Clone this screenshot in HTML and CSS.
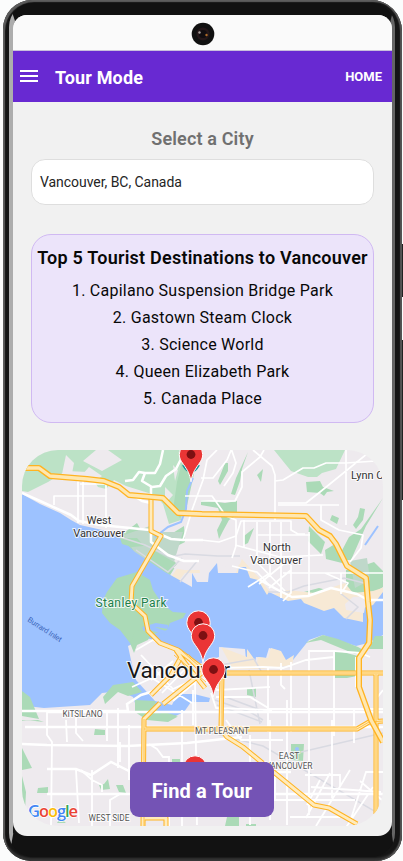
FILE: index.html
```html
<!DOCTYPE html>
<html lang="en">
<head>
<meta charset="utf-8">
<title>Tour Mode</title>
<link rel="stylesheet" href="styles.css">
</head>
<body>
<div class="phone">
  <i class="key key-volume"></i><i class="key key-power"></i>
  <div class="bezel">
    <div class="screen">
      <div class="status"><svg class="camera" viewBox="0 0 24 24"><circle cx="12" cy="12" r="11.3" fill="#111"/><circle cx="12" cy="12" r="6.5" fill="#241719"/><circle cx="12" cy="12" r="4" fill="#100d10"/><circle cx="8.5" cy="10.5" r="1.2" fill="#aaa09b"/><circle cx="15.5" cy="13" r="1.2" fill="#ad6b28"/></svg></div>
      <header class="bar">
        <svg class="menu" viewBox="0 0 18 12"><path d="M0 1h18M0 6h18M0 11h18" stroke="#fff" stroke-width="2"/></svg>
        <h1 class="title">Tour Mode</h1>
        <span class="home">HOME</span>
      </header>
      <main class="content">
        <h2 class="prompt">Select a City</h2>
        <div class="field">Vancouver, BC, Canada</div>
        <section class="card">
          <h3 class="card-title">Top 5 Tourist Destinations to Vancouver</h3>
          <div class="item">1. Capilano Suspension Bridge Park</div>
          <div class="item">2. Gastown Steam Clock</div>
          <div class="item">3. Science World</div>
          <div class="item">4. Queen Elizabeth Park</div>
          <div class="item">5. Canada Place</div>
        </section>
        <div class="map">
          <svg class="map-art" viewBox="22 450 361 376">
            <defs>
              <g id="pin"><path d="M0 .8C-1.200-7-3.500-11-7.500-16.500C-10.500-20.500-11.700-23-11.700-26.500A11.700 11.700 0 0 1 11.700-26.500C11.700-23 10.500-20.500 7.500-16.500C3.500-11 1.200-7 0 .8Z" fill="#ea3535" stroke="#fff"/><circle cy="-26.500" r="4.400" fill="#7d1012"/></g>
            </defs>
            <path fill="#eeeaee" d="M22 450h361v376H22z"/>
            <g fill="#bce2c6">
              <path d="M22 450h154l11 0-2 50-4 20-12 4-6-20-8-9-29-9-12-6-8 9-8-2-10-15-22-1-18 11-20 10-6-1z"/>
              <path d="M274 450h71l-9 19-14 4-5 4-9 0-17-6z"/>
            </g>
            <g fill="#abdab7">
              <path d="M185 450h11l-2 24-8 36-6 8-7-8 4-28zM248 452l-6 17-2 12-5 14-4-1 5-16zM225 463l3 0v8l-8 14-2-4zM306 482l14-1 3 6 11 4-7 1-3 4-4-3-13-1zM201 500l24 3 12-2v14l-8 5-6 11-4 8-2-9 5-10-4-12-17-3zM257 475l6-6-2 13zM360 508l5 1-2 11-7 9-3-4 5-8zM383 498l-17 28-15 34-14 0 12-23 12-8zM332 515l7 3-2 6-7-4zM309 526l16 16-4 12-13-13zM244 536l10-8-6 15-4 2z"/>
              <path d="M120 536l17-13 9 16 22-3 16-10 1 16-20 10 12 12-8 13-14-4-18-15z"/>
              <path d="M346 570l16-4 12-4 9 9v16l-17 11-20-9zM300 593l19-5 15 4-7 9-17-1zM325 550l10-6 9 12 2 8-20-5z"/>
            </g>
            <g fill="#eeeaee"><path d="M83 461l13-11h12l14 10-20 11zM66 455l8 8-3 16-9-5zM82 475l7-8 13 9-9 7zM155 508l9 8-10 9-6-7zM165 487l8 8-8 9zM173 465l5 5-3 11z"/></g>
            <g fill="#bfd8ca"><path d="M124 535l26-9 5 17-8 20-11-8zM151 532h32l-9 30-21-12z"/><path d="M350 561l17-3 3 22-15 8z"/></g>
            <path fill="#f7e9d5" d="M169 580l14-20 15-1 2 14h36l5-15 20 22 11 15 15-5 28 3 30-10 8 10 20-2 12-4-5 30-20 5-30-1-60-19-15 1-30-30-40 0-16 20z"/>
            <path fill="#9dc2ff" d="M22 494l18 10 20 9 11 7 9 5 31 7 8 5 16 15 30 20 27 15 0-14 5 9h11l1-9 8-10 1 10h20l1-6h7l4 11 8 2 9 15 2-3 19 9 13-2 3 4 20 8 10-3 10 10 19 4V608l10-3 10-13v43l-15 8-12 3-13-4-20-7-14 5-16 20-9 0-5-9-10-3-3 10-10-1-1 6-9-3-1-11-26-2v10l-20 7-19-13-19-10-16-3-17 8 3 14 5 20 19 21 17 4 5-11h17l16 4-1 4-18 0-7 10-15 7h-19l-12-7-5-15-13-6-18 2-12 12-46 3-27-3-8-5z"/>
            <path fill="#f7e9d5" d="M221 647l26 10v-8l10 14 1-6 10 1 3-10 10 3 5 9 8-5-2 10-30 4h-29z"/>
            <path fill="#eeeaee" d="M173 568l10-9 14-1 5 12h-18zM217 563l18-9 8 2-3 8-7 6zM345 604l8-7 14-1-3 17-18-3z"/>
            <g fill="#abdab7">
              <path d="M103 600l4-8 10-14 20-6 13 8 3 10 10 15 10 7 13 1-3 5-13 5-3 7-17 5-20 8-10-13-10-7-8-10zM120 538h17l7 8-12 1-10-3z"/>
              <path d="M130 643l4 10 3-8 11-5 4-8-16-2zM103 697l10-12 20-3 9 10-14 4-10-4-13 12zM22 691l8 6 9 22-17-3zM135 700l20 1 3 12 19 4-9 5-21-2-12-8zM160 711l18 5-6 3-10-1zM22 721l16-1 6 2-9-1-15-1zM22 748l10 20-10 2zM95 729l10 1v5h-11zM247 689l9-1v9l-9-2zM335 650l23 6-1 20-10 2-12 0zM375 636l8 0v13h-14z"/>
              <path d="M291 744l13 0-1 17-12-1zM38 788l10-1v6H37zM99 785l5-1 4-5 2 10-9 1zM116 785h7l3 8-7-1zM172 759h8v8h-8zM60 818l6 5h-9zM22 776l4 16-1 20-3-10zM227 817h12v9h-14zM246 824h10v2h-10z"/>
              <path d="M305 643l18-8 15 4 20 8 7 4-10 3-22-9-12-5z"/>
            </g>
            <path fill="none" stroke="#9dc2ff" stroke-width="4" d="M143 629l13-4 12 2M151 628l14 5"/><path fill="none" stroke="#9dc2ff" stroke-width="2" d="M193 478l-6 13-1 18-5 13-13 5-13 10M378 526l-13 19"/><circle cx="297" cy="749" r="2" fill="#9dc2ff"/>
            <g fill="none" stroke="#d9dae2" stroke-width="1.5">
              <path d="M120 537l25 8 25 12 15-3 33 2 22 0M136 550l32 22 14-14M198 560l-18 22M268 592l20 0 16-6 40-8 20 5M220 665l34-6 7 12M215 700l35 12 13 8M217 705l45 17M220 695l43 16M340 593l18 14-12 12M201 730l62 16 120 70M301 752l82-19M249 670l11 54"/>
            </g>
            <g fill="none" stroke="#fff" stroke-width="1.7" stroke-linejoin="round">
              <path stroke-width="2.500" d="M22 493l18 8 31 14 8 6 21 4 50 5 21 9 12 1h20M125 481l8-1 6-8 6 1 10 0 5-9 3-14M145 473l-3 8 10 6 8-1 6-10 10-7 5-10-1-7M151 487v55l17 13 16 6h15M151 503l-9-2-11-7"/>
              <path d="M54 505v-9h23M78 523V480M83 524V480M80 484h26M54 496h52M106 484v44M183 540l9-30 11-30 4-20 10-10M185 496h27l14 20 10 4v26l-4 12M201 478h12l14-18 5-12M231 448l5 15-3 10-9 13M201 501h34l7-14 0-15 18-15 4-7M253 450l19 16 3 9v45M275 481l8-1 20-12 11 0 12-5h20l30-2 5 3M278 503h28l14-11 53-43M278 505h61M346 450v75M321 505v15l18 10 24 5-2 13-11 14"/>
              <path d="M201 540l18 2 17-6 5-15h50v9l7 4 7 0M235 545l45 12 43-2M244 520v28M257 522v38M270 522v55M281 522v76M258 535h52M250 555l35 36M232 566l25 6 12 13M270 573l-22 14M286 562l-27 22M291 570l-22 18M291 565v28l-8 8M309 532v63M283 573h100M341 573v21M325 573l23 10-6 9"/>
              <path stroke-width="2.500" d="M260 580l18 10 14 7 16-1 23-8 26 6 11 6h15"/>
            </g>
            <g fill="none" stroke="#fff" stroke-width="1.8">
              <path stroke-width="2.500" d="M22 711h106l-1-7 14-9 20-6M47 712h336M25 727h358M22 744l25 1 80 1 60-3 55-6M47 769h29l15 6 20-13 20 10h160M47 794h336"/>
              <path d="M47 712v23l5 7-1 84M66 720l1 22M76 715v18l7 8M76 770l3 53M92 770v60M107 711v30M118 708v60M81 770l11 10 10 5v7M120 742v20M110 826V800l10-6M129 725v55M149 744l8 5 6 8h6v69M182 710v116M193 690v35M195 680l2 145M211 693l5 15 5 1M136 650l17-10 15 8M141 655l32 34 22-10M132 687l20-9 40 25M151 680l22-19M162 693l24-25M173 701l28-24M202 678l15 12 53-3M218 668l45-1 20 1 23-8 28-3M268 668v64M281 663v22l4 4M291 662v70M309 650v85M309 651h26l25 2 10 4M334 652v84M356 657v30M216 708l56 2M216 697h34l20 12h113M250 735v90M270 720v100M287 700v125M309 728v87M332 720v78M354 708v35M383 690l-7 9M226 720l15 20h42M305 775h35v12M311 787l70 5M373 787l-28 42M350 770l-34 56M383 772h-17l-16 50M320 780l-13 25M330 773l-24 45M275 770v30h80M360 781l23 20M290 817h50M240 815h30"/>
            </g>
            <g fill="none" stroke-linejoin="round" stroke="#ffb321" stroke-width="5">
              <path d="M151 498v33l10 5-29 50-1 17 14 13 3 15 12 12 18 7 20 15 13 10M176 650l9 13 20 25M187 656l16 16-40 32M160 703l-16 16-1 107M151 695l20-20 10-18"/>
              <path d="M203 673h180M144 729h213l12-7 14-1M222 674l-1 55 6 8 16 10 71 58 15 3 28 16M376 674v140M142 818h24v8"/>
            </g>
            <g fill="none" stroke-linejoin="round" stroke="#ffebbc" stroke-width="3">
              <path d="M151 498v33l10 5-29 50-1 17 14 13 3 15 12 12 18 7 20 15 13 10M176 650l9 13 20 25M187 656l16 16-40 32M160 703l-16 16-1 107M151 695l20-20 10-18"/>
              <path d="M203 673h180M144 729h213l12-7 14-1M222 674l-1 55 6 8 16 10 71 58 15 3 28 16M376 674v140M142 818h24v8"/>
              <path stroke="#ffc24b" stroke-width="1" d="M203 673h180M144 729h213l12-7 14-1M144 719v107M376 674v140M222 674v55M174 655l32 27M182 651l26 23"/>
            </g>
            <g fill="none" stroke-linejoin="round">
              <path stroke="#ffb321" stroke-width="6" d="M22 468h17l11 8 37 3 17 2 15 6 10 8 34 3 15 15 L202 514 306 516 319 530 330 536 336 544 347 566 366 578 368 602 370 620 369 643 359 658V687L371 720 383 742"/>
              <path stroke="#ffe7b0" stroke-width="3.4" d="M22 468h17l11 8 37 3 17 2 15 6 10 8 34 3 15 15 L202 514 306 516 319 530 330 536 336 544 347 566 366 578 368 602 370 620 369 643 359 658V687L371 720 383 742"/>
            </g>
            <g class="labels">
              <text class="town" x="99" y="524">West</text><text class="town" x="99" y="537">Vancouver</text>
              <text class="town" x="277" y="551">North</text><text class="town" x="276" y="564">Vancouver</text>
              <text class="town start" x="351" y="479">Lynn C</text>
              <text class="park" x="131" y="606.5" textLength="71">Stanley Park</text>
              <text class="water" transform="translate(27 621) rotate(33)" textLength="39">Burrard Inlet</text>
              <text class="city" x="127" y="677.500" textLength="103">Vancouver</text>
              <text class="area" x="82.500" y="717" textLength="40">KITSILANO</text>
              <text class="area" x="222" y="733.500" textLength="54">MT PLEASANT</text>
              <text class="area" x="289" y="759">EAST</text><text class="area" x="289" y="769" textLength="47">VANCOUVER</text>
              <text class="area" x="109" y="821" textLength="41">WEST SIDE</text>
            </g>
            <path d="M183 465q8 14 16 0" fill="none" stroke="#159399" stroke-width="2"/>
            <use href="#pin" x="191" y="481"/><use href="#pin" x="198.500" y="649"/><use href="#pin" x="203" y="662"/><use href="#pin" x="213.500" y="696"/><use href="#pin" x="195" y="794"/>
            <text class="google" x="28" y="816.500" textLength="50"><tspan fill="#4285f4">G</tspan><tspan fill="#ea4335">o</tspan><tspan fill="#fbbc05">o</tspan><tspan fill="#4285f4">g</tspan><tspan fill="#34a853">l</tspan><tspan fill="#ea4335">e</tspan></text>
          </svg>
          <button class="find">Find a Tour</button>
        </div>
      </main>
    </div>
  </div>
</div>
</body>
</html>
```
FILE: styles.css
```css
* { box-sizing: border-box; }
body { margin: 0; height: 861px; overflow: hidden; background: #fbfcfc; font-family: Roboto, sans-serif; }
.phone {
  position: relative;
  width: 399px;
  height: 861px;
  margin-left: 3px;
  padding: 3px 4px 4px 6px;
  border-radius: 29px 31px 26px 28px;
  background: #151515;
  box-shadow: inset 2px 2px 1px #5d5d5d, inset -2px 0 1px #555, inset 0 -3px 2px #333;
}
.key { position: absolute; right: -1px; width: 1px; background: #222; }
.key-volume { top: 244px; height: 53px; }
.key-power { top: 340px; height: 160px; }
.bezel {
  height: 854px;
  border-style: solid;
  border-width: 12px 3px 22px 4px;
  border-color: #111 #656565 #121212 #adadad;
  margin-right: 3px;
  border-radius: 24px;
}
.screen { height: 821px; overflow: hidden; border-radius: 14px; background: #f1f1f1; }
.status { display: flex; justify-content: center; height: 36px; padding-top: 7px; background: #fafafa; border-bottom: 1px solid #c9c0dc; }
.camera { width: 24px; height: 24px; }
.bar { display: flex; align-items: center; height: 51px; padding: 0 10px 0 7px; background: #6829d2; color: #fff; }
.menu { width: 18px; height: 12px; margin-top: -1px; }
.title { margin: 1px 0 0 17px; font-size: 18px; font-weight: 700; letter-spacing: .15px; }
.home { margin-left: auto; font-size: 13px; font-weight: 700; }
.content { padding: 25px 18px 0; color: #080808; text-align: center; }
.prompt { margin: 0; height: 32px; font-size: 18px; line-height: 24px; font-weight: 600; color: #707070; letter-spacing: .15px; }
.field { display: flex; align-items: center; height: 46px; padding: 0 8px; border: 1px solid #dedede; border-radius: 14px; background: #fff; color: #242424; font-size: 14px; letter-spacing: -.05px; }
.card { height: 189px; margin-top: 29px; padding-top: 9px; border: 1px solid #d0b9f2; border-radius: 20px; background: #ece4fa; white-space: nowrap; }
.card-title { margin: 0 0 5px; font-size: 18px; line-height: 28px; font-weight: 600; letter-spacing: .23px; }
.item { font-size: 16px; line-height: 27px; letter-spacing: .25px; }
.map { position: relative; width: 361px; height: 376px; margin: 27px 0 0 -9px; overflow: hidden; border-radius: 36px; }
.map-art { display: block; width: 361px; height: 376px; }
.find { position: absolute; left: 108px; top: 312px; width: 144px; height: 55px; padding: 2px 0 0; border: 0; border-radius: 9px; background: #7453b5; color: #fff; font: 700 20px Roboto, sans-serif; letter-spacing: .1px; }
.labels text { text-anchor: middle; paint-order: stroke; stroke: #fff; stroke-opacity: .8; stroke-width: 2px; fill: #333; }
.labels .town { font-size: 11px; }
.labels .start, .labels .city, .labels .water { text-anchor: start; }
.labels .park { font-size: 12px; fill: #21804b; }
.labels .water { font-size: 7.5px; fill: #4169bd; stroke: none; }
.labels .city { font-size: 22.5px; fill: #171717; }
.labels .area { font-size: 8.5px; fill: #555; }
.google { font: 600 16.5px "Open Sans", sans-serif; paint-order: stroke; stroke: #fff; stroke-width: 1.5px; }
```
